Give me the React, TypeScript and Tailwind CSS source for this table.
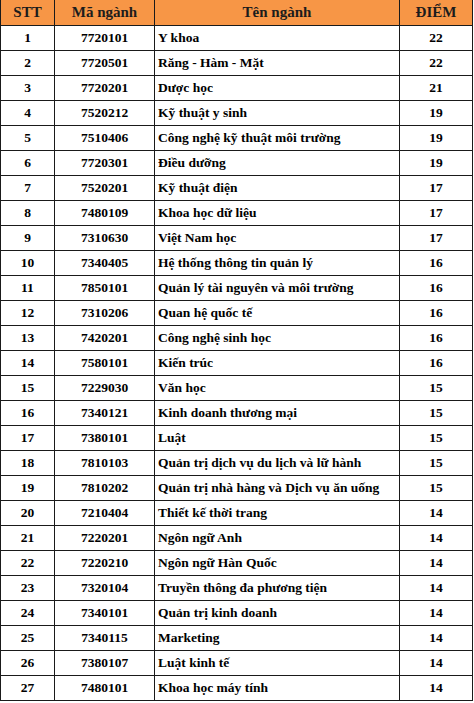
const rows: [string, string, string, number][] = [
  ['1', '7720101', 'Y khoa', 22],
  ['2', '7720501', 'Răng - Hàm - Mặt', 22],
  ['3', '7720201', 'Dược học', 21],
  ['4', '7520212', 'Kỹ thuật y sinh', 19],
  ['5', '7510406', 'Công nghệ kỹ thuật môi trường', 19],
  ['6', '7720301', 'Điều dưỡng', 19],
  ['7', '7520201', 'Kỹ thuật điện', 17],
  ['8', '7480109', 'Khoa học dữ liệu', 17],
  ['9', '7310630', 'Việt Nam học', 17],
  ['10', '7340405', 'Hệ thống thông tin quản lý', 16],
  ['11', '7850101', 'Quản lý tài nguyên và môi trường', 16],
  ['12', '7310206', 'Quan hệ quốc tế', 16],
  ['13', '7420201', 'Công nghệ sinh học', 16],
  ['14', '7580101', 'Kiến trúc', 16],
  ['15', '7229030', 'Văn học', 15],
  ['16', '7340121', 'Kinh doanh thương mại', 15],
  ['17', '7380101', 'Luật', 15],
  ['18', '7810103', 'Quản trị dịch vụ du lịch và lữ hành', 15],
  ['19', '7810202', 'Quản trị nhà hàng và Dịch vụ ăn uống', 15],
  ['20', '7210404', 'Thiết kế thời trang', 14],
  ['21', '7220201', 'Ngôn ngữ Anh', 14],
  ['22', '7220210', 'Ngôn ngữ Hàn Quốc', 14],
  ['23', '7320104', 'Truyền thông đa phương tiện', 14],
  ['24', '7340101', 'Quản trị kinh doanh', 14],
  ['25', '7340115', 'Marketing', 14],
  ['26', '7380107', 'Luật kinh tế', 14],
  ['27', '7480101', 'Khoa học máy tính', 14],
];

const cell = 'flex items-center border-r border-b border-[#1a1a1a]';

export default function App() {
  return (
    <div className="w-[474px] h-[703px] bg-white font-['Liberation_Serif',serif] font-bold text-black">
      <div className="w-[473px] border-l border-[#1a1a1a]">
        {/* Header */}
        <div className="grid grid-cols-[54px_100px_245px_73px] h-[26px] bg-[#f79646] text-[15px] text-[#1c1c1c]">
          <div className={`${cell} justify-center`}>STT</div>
          <div className={`${cell} justify-center`}>Mã ngành</div>
          <div className={`${cell} justify-center`}>Tên ngành</div>
          <div className={`${cell} justify-center`}>ĐIỂM</div>
        </div>

        {/* Rows */}
        {rows.map(([stt, code, name, score]) => (
          <div key={stt} className="grid grid-cols-[54px_100px_245px_73px] h-[25px] text-[13.5px]">
            <div className={`${cell} justify-center`}>{stt}</div>
            <div className={`${cell} justify-center`}>{code}</div>
            <div className={`${cell} pl-[3px] whitespace-nowrap`}>{name}</div>
            <div className={`${cell} justify-center`}>{score}</div>
          </div>
        ))}
      </div>
    </div>
  );
}
